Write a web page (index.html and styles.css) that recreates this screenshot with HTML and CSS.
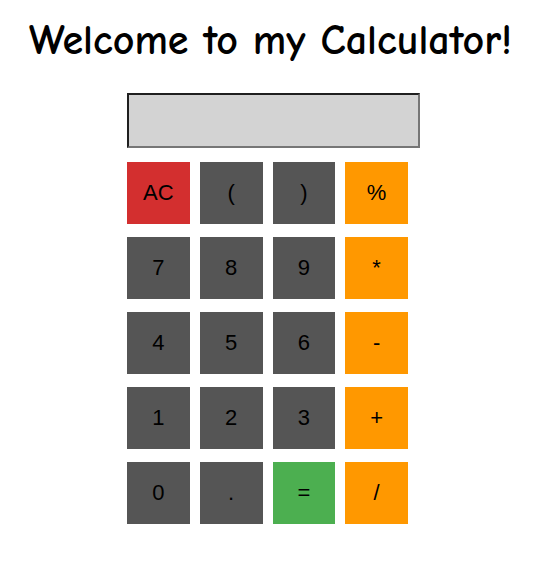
FILE: index.html
```html
<!DOCTYPE html>
<html>
<head>
<meta charset="utf-8">
<link rel="stylesheet" href="styles.css">
</head>
<body>
<h1 class="title">Welcome to my Calculator!</h1>
<div class="calc">
  <input class="display" type="text" readonly>
  <div class="keys">
    <button class="key red">AC</button>
    <button class="key dark">(</button>
    <button class="key dark">)</button>
    <button class="key orange">%</button>
    <button class="key dark">7</button>
    <button class="key dark">8</button>
    <button class="key dark">9</button>
    <button class="key orange">*</button>
    <button class="key dark">4</button>
    <button class="key dark">5</button>
    <button class="key dark">6</button>
    <button class="key orange">-</button>
    <button class="key dark">1</button>
    <button class="key dark">2</button>
    <button class="key dark">3</button>
    <button class="key orange">+</button>
    <button class="key dark">0</button>
    <button class="key dark">.</button>
    <button class="key green">=</button>
    <button class="key orange">/</button>
  </div>
</div>
</body>
</html>
```
FILE: styles.css
```css
html, body {
  margin: 0;
  padding: 0;
  background: #ffffff;
}
body {
  width: 541px;
  height: 563px;
  overflow: hidden;
}
.title {
  margin: 17px 0 0 0;
  height: 76px;
  text-align: center;
  font-family: "Comic Neue", "Comic Sans MS", Lato, sans-serif;
  font-weight: bold;
  font-size: 42px;
  line-height: 48px;
  color: #000;
}
.calc {
  margin-left: 127px;
  display: flex;
  flex-direction: column;
}
.display {
  box-sizing: border-box;
  width: 293px;
  height: 55px;
  margin: 0;
  border: 2px solid;
  border-color: #1f1f1f #767676 #767676 #1f1f1f;
  background: #d3d3d3;
  padding: 0;
}
.keys {
  margin-top: 14px;
  display: grid;
  grid-template-columns: repeat(4, 62.75px);
  grid-auto-rows: 62px;
  column-gap: 10px;
  row-gap: 13px;
}
.key {
  border: none;
  margin: 0;
  padding: 0;
  font-family: "Liberation Sans", Arial, sans-serif;
  font-size: 22px;
  color: #000;
}
.red { background: #d32f2f; }
.dark { background: #555555; }
.orange { background: #ff9800; }
.green { background: #4caf50; }
```
